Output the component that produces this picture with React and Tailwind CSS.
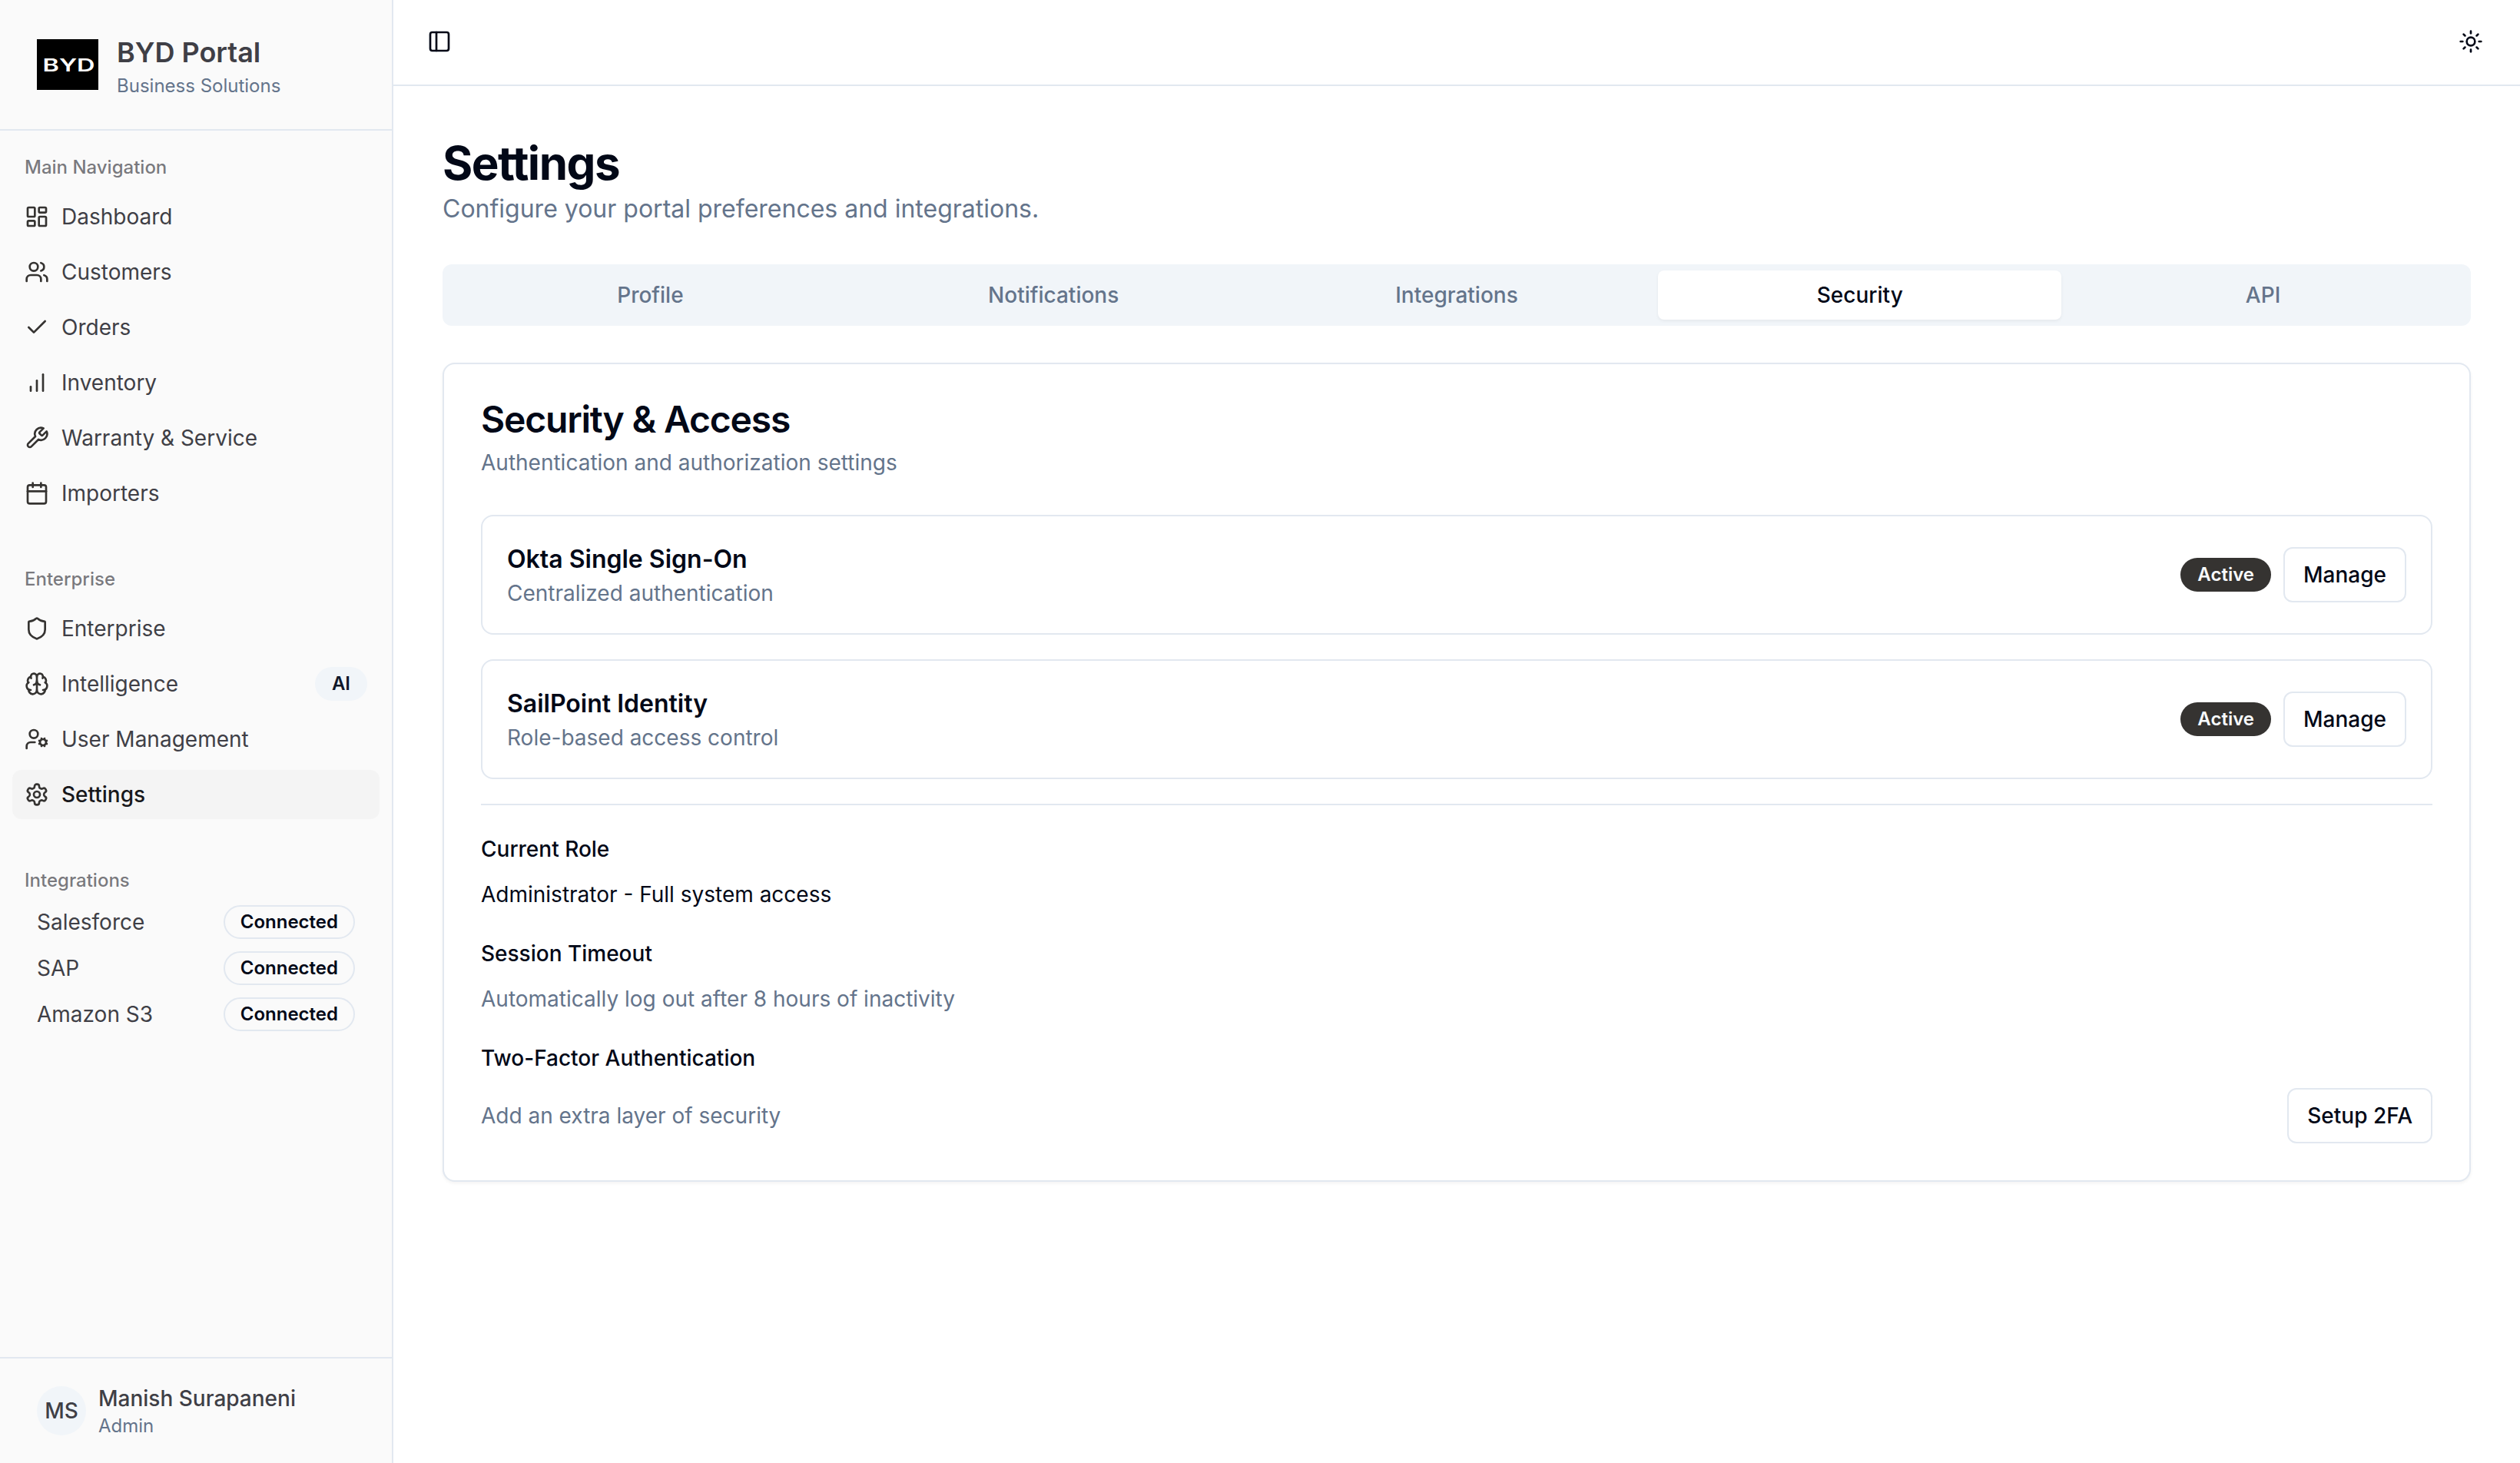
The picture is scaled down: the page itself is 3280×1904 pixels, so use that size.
import React, { useState } from 'react';
import {
  Brain,
  Calendar,
  Check,
  LayoutDashboard,
  PanelLeft,
  Shield,
  Sun,
  UserCog,
  Users,
} from 'lucide-react';

function Icon({ className, children }) {
  return (
    <svg
      className={className}
      viewBox="0 0 24 24"
      fill="none"
      stroke="currentColor"
      strokeWidth="2"
      strokeLinecap="round"
      strokeLinejoin="round"
    >
      {children}
    </svg>
  );
}

// Three rising bars without axes
function BarsIcon({ className }) {
  return (
    <Icon className={className}>
      <line x1="12" x2="12" y1="20" y2="10" />
      <line x1="18" x2="18" y1="20" y2="4" />
      <line x1="6" x2="6" y1="20" y2="16" />
    </Icon>
  );
}

function WrenchIcon({ className }) {
  return (
    <Icon className={className}>
      <path d="M14.7 6.3a1 1 0 0 0 0 1.4l1.6 1.6a1 1 0 0 0 1.4 0l3.77-3.77a6 6 0 0 1-7.94 7.94l-6.91 6.91a2.12 2.12 0 0 1-3-3l6.91-6.91a6 6 0 0 1 7.94-7.94l-3.76 3.76z" />
    </Icon>
  );
}

function GearIcon({ className }) {
  return (
    <Icon className={className}>
      <path d="M12.22 2h-.44a2 2 0 0 0-2 2v.18a2 2 0 0 1-1 1.73l-.43.25a2 2 0 0 1-2 0l-.15-.08a2 2 0 0 0-2.73.73l-.22.38a2 2 0 0 0 .73 2.73l.15.1a2 2 0 0 1 1 1.72v.51a2 2 0 0 1-1 1.74l-.15.09a2 2 0 0 0-.73 2.73l.22.38a2 2 0 0 0 2.73.73l.15-.08a2 2 0 0 1 2 0l.43.25a2 2 0 0 1 1 1.73V20a2 2 0 0 0 2 2h.44a2 2 0 0 0 2-2v-.18a2 2 0 0 1 1-1.73l.43-.25a2 2 0 0 1 2 0l.15.08a2 2 0 0 0 2.73-.73l.22-.39a2 2 0 0 0-.73-2.73l-.15-.08a2 2 0 0 1-1-1.74v-.5a2 2 0 0 1 1-1.74l.15-.09a2 2 0 0 0 .73-2.73l-.22-.38a2 2 0 0 0-2.73-.73l-.15.08a2 2 0 0 1-2 0l-.43-.25a2 2 0 0 1-1-1.73V4a2 2 0 0 0-2-2z" />
      <circle cx="12" cy="12" r="3" />
    </Icon>
  );
}

const mainNavigation = [
  { title: 'Dashboard', icon: LayoutDashboard },
  { title: 'Customers', icon: Users },
  { title: 'Orders', icon: Check },
  { title: 'Inventory', icon: BarsIcon },
  { title: 'Warranty & Service', icon: WrenchIcon },
  { title: 'Importers', icon: Calendar },
];

const enterpriseNavigation = [
  { title: 'Enterprise', icon: Shield },
  { title: 'Intelligence', icon: Brain, badge: 'AI' },
  { title: 'User Management', icon: UserCog },
  { title: 'Settings', icon: GearIcon, active: true },
];

const integrations = ['Salesforce', 'SAP', 'Amazon S3'];

const tabs = ['Profile', 'Notifications', 'Integrations', 'Security', 'API'];

const providers = [
  { name: 'Okta Single Sign-On', description: 'Centralized authentication' },
  { name: 'SailPoint Identity', description: 'Role-based access control' },
];

const badgeVariants = {
  default: 'border-transparent bg-[#353331] text-[#f8fafc]',
  secondary: 'border-transparent bg-[#f1f5f9] text-[#0f172a]',
  outline: 'border-[#e2e8f0] text-[#020817]',
};

function Badge({ variant = 'default', className = '', children }) {
  return (
    <div
      className={`inline-flex items-center rounded-full border-2 px-5 py-1 text-[24px] leading-8 font-semibold ${badgeVariants[variant]} ${className}`}
    >
      {children}
    </div>
  );
}

function OutlineButton({ children }) {
  return (
    <button className="flex h-18 items-center justify-center rounded-xl border-2 border-[#e2e8f0] bg-white px-6 text-[28px] leading-10 font-medium whitespace-nowrap">
      {children}
    </button>
  );
}

function Logo() {
  return (
    <svg className="h-[66px] w-20 shrink-0" viewBox="0 0 80 66">
      <rect width="80" height="66" fill="#000" />
      <text
        x="7.5"
        y="42.3"
        fill="#fff"
        fontFamily="Inter, sans-serif"
        fontSize="22.8"
        fontWeight="600"
        textLength="68"
        lengthAdjust="spacingAndGlyphs"
      >
        BYD
      </text>
    </svg>
  );
}

function NavGroup({ label, children }) {
  return (
    <div className="flex flex-col p-4">
      <div className="flex h-16 items-center px-4 text-[24px] font-medium text-[#3f3f46]/70">
        {label}
      </div>
      {children}
    </div>
  );
}

function NavMenu({ items }) {
  return (
    <ul className="flex flex-col gap-2">
      {items.map(({ title, icon: ItemIcon, badge, active }) => (
        <li key={title}>
          <button
            className={`flex h-16 w-full items-center gap-4 rounded-xl p-4 text-left text-[28px] leading-10 ${
              active ? 'bg-[#f4f4f4] font-medium text-[#18181b]' : ''
            }`}
          >
            <ItemIcon className="size-8 shrink-0 text-[#353331]" />
            <span>{title}</span>
            {badge && (
              <Badge variant="secondary" className="ml-auto">
                {badge}
              </Badge>
            )}
          </button>
        </li>
      ))}
    </ul>
  );
}

function Sidebar() {
  return (
    <aside className="flex w-[512px] shrink-0 flex-col border-r-2 border-[#e2e8f0] bg-[#fafafa] text-[#3f3f46]">
      {/* Brand */}
      <div className="flex items-center gap-6 border-b-2 border-[#e2e8f0] px-12 py-10">
        <Logo />
        <div>
          <h2 className="text-[36px] leading-14 font-semibold">BYD Portal</h2>
          <p className="text-[24px] leading-8 text-[#64748b]">Business Solutions</p>
        </div>
      </div>

      <div className="flex flex-1 flex-col gap-4">
        <NavGroup label="Main Navigation">
          <NavMenu items={mainNavigation} />
        </NavGroup>
        <NavGroup label="Enterprise">
          <NavMenu items={enterpriseNavigation} />
        </NavGroup>
        <NavGroup label="Integrations">
          <div className="space-y-4 px-8">
            {integrations.map((name) => (
              <div key={name} className="flex items-center justify-between text-[28px] leading-10">
                <span>{name}</span>
                <Badge variant="outline">Connected</Badge>
              </div>
            ))}
          </div>
        </NavGroup>
      </div>

      {/* Signed in user */}
      <div className="flex items-center gap-4 border-t-2 border-[#e2e8f0] px-12 py-8">
        <div className="flex size-16 items-center justify-center rounded-full bg-[#f1f5f9] text-[28px] font-medium">
          MS
        </div>
        <div>
          <p className="text-[28px] leading-10 font-medium">Manish Surapaneni</p>
          <p className="text-[24px] leading-8 text-[#64748b]">Admin</p>
        </div>
      </div>
    </aside>
  );
}

function SecurityCard() {
  return (
    <div className="rounded-2xl border-2 border-[#e2e8f0] bg-white shadow-[0_2px_4px_0_rgba(0,0,0,0.05)]">
      <div className="flex flex-col gap-3 p-12">
        <h3 className="text-[48px] leading-none font-semibold tracking-tight">Security & Access</h3>
        <p className="text-[28px] leading-10 text-[#64748b]">
          Authentication and authorization settings
        </p>
      </div>

      <div className="space-y-8 px-12 pb-12">
        {providers.map(({ name, description }) => (
          <div
            key={name}
            className="flex items-center justify-between rounded-2xl border-2 border-[#e2e8f0] p-8"
          >
            <div>
              <h4 className="font-semibold">{name}</h4>
              <p className="text-[28px] leading-10 text-[#64748b]">{description}</p>
            </div>
            <div className="flex items-center gap-4">
              <Badge>Active</Badge>
              <OutlineButton>Manage</OutlineButton>
            </div>
          </div>
        ))}

        <div className="h-0.5 w-full bg-[#e2e8f0]" />

        <div className="space-y-4">
          <div>
            <label className="text-[28px] leading-none font-medium">Current Role</label>
          </div>
          <p className="text-[28px] leading-10">Administrator - Full system access</p>
        </div>

        <div className="space-y-4">
          <div>
            <label className="text-[28px] leading-none font-medium">Session Timeout</label>
          </div>
          <p className="text-[28px] leading-10 text-[#64748b]">
            Automatically log out after 8 hours of inactivity
          </p>
        </div>

        <div className="space-y-4">
          <div>
            <label className="text-[28px] leading-none font-medium">Two-Factor Authentication</label>
          </div>
          <div className="flex items-center justify-between">
            <p className="text-[28px] leading-10 text-[#64748b]">Add an extra layer of security</p>
            <OutlineButton>Setup 2FA</OutlineButton>
          </div>
        </div>
      </div>
    </div>
  );
}

export default function App() {
  const [activeTab, setActiveTab] = useState('Security');

  return (
    <div className="flex min-h-screen bg-white font-['Inter',sans-serif] text-[32px] leading-12 text-[#020817]">
      <Sidebar />

      <div className="flex min-w-0 flex-1 flex-col">
        <header className="flex h-28 items-center justify-between border-b-2 border-[#e2e8f0] pr-12 pb-0.5 pl-11">
          <button aria-label="Toggle sidebar">
            <PanelLeft className="size-8" />
          </button>
          <button aria-label="Toggle theme">
            <Sun className="size-8" />
          </button>
        </header>

        <main className="flex-1 space-y-12 p-16">
          <div>
            <h1 className="text-[60px] leading-18 font-bold tracking-tight">Settings</h1>
            <p className="text-[#64748b]">Configure your portal preferences and integrations.</p>
          </div>

          <div className="grid h-20 grid-cols-5 rounded-xl bg-[#f1f5f9] p-2 text-[#64748b]">
            {tabs.map((tab) => (
              <button
                key={tab}
                onClick={() => setActiveTab(tab)}
                className={`rounded-lg px-6 py-3 text-[28px] leading-10 font-medium ${
                  tab === activeTab
                    ? 'bg-white text-[#020817] shadow-[0_2px_4px_0_rgba(0,0,0,0.05)]'
                    : ''
                }`}
              >
                {tab}
              </button>
            ))}
          </div>

          <SecurityCard />
        </main>
      </div>
    </div>
  );
}
